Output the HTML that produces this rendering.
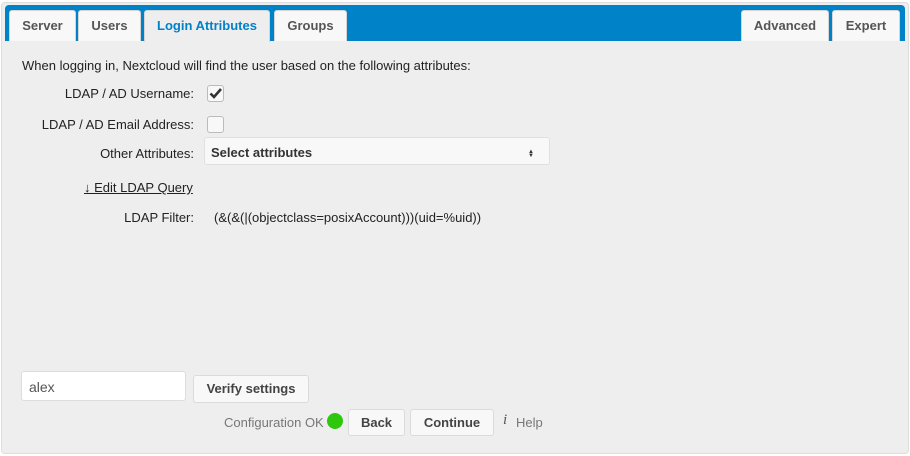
<!DOCTYPE html>
<html><head><style>
body{margin:0;width:910px;height:456px;background:#fff;font-family:"Liberation Sans",sans-serif;font-size:13px;color:#222;position:relative;overflow:hidden}
.box{position:absolute;left:1px;top:2px;width:906px;height:450px;border:1px solid #ddd;border-radius:4px;background:#eee}
.bar{position:absolute;left:5px;top:5px;width:900px;height:36px;background:#0082c9;border-radius:4px 4px 0 0}
.tab{position:absolute;top:10px;height:31px;background:#f8f8f8;border:1px solid #d5d5d5;border-bottom:none;border-radius:3px 3px 0 0;box-sizing:border-box;font-weight:bold;color:#555;text-align:center;line-height:30px;font-size:13px}
.tab.act{background:#eee;color:#0082c9;height:32px}
.a{position:absolute;white-space:nowrap}
.lbl{position:absolute;text-align:right;width:194px;left:0}
.cb{position:absolute;left:207px;width:15px;height:15px;border:1px solid #bbb;border-radius:3px;background:#f8f8f8}
.btn{position:absolute;background:#f8f8f8;border:1px solid #dbdbdb;border-radius:3px;box-sizing:border-box;font-weight:bold;color:#444;text-align:center}
</style></head><body>
<div class="box"></div>
<div class="bar"></div>
<div class="tab" style="left:9px;width:67px">Server</div>
<div class="tab" style="left:78px;width:63px">Users</div>
<div class="tab act" style="left:144px;width:126px">Login Attributes</div>
<div class="tab" style="left:274px;width:73px">Groups</div>
<div class="tab" style="left:741px;width:88px">Advanced</div>
<div class="tab" style="left:832px;width:68px">Expert</div>
<div class="a" style="left:22px;top:58px">When logging in, Nextcloud will find the user based on the following attributes:</div>
<div class="lbl" style="top:86px">LDAP / AD Username:</div>
<div class="cb" style="top:85px"></div>
<svg class="a" style="left:207px;top:85px" width="17" height="17" viewBox="0 0 17 17"><path d="M3.5 8.5 L7 12 L14 4" fill="none" stroke="#333" stroke-width="2.6"/></svg>
<div class="lbl" style="top:117px">LDAP / AD Email Address:</div>
<div class="cb" style="top:116px"></div>
<div class="lbl" style="top:146px">Other Attributes:</div>
<div class="a" style="left:204px;top:137px;width:346px;height:28px;background:#f8f8f8;border:1px solid #e0e0e0;border-radius:3px;box-sizing:border-box"></div>
<div class="a" style="left:211px;top:145px;font-weight:bold;color:#333">Select attributes</div>
<div class="a" style="left:528px;top:150px;font-size:6px;color:#333;line-height:4px">▲<br>▼</div>
<div class="a" style="left:84px;top:180px;text-decoration:underline;color:#222">↓ Edit LDAP Query</div>
<div class="lbl" style="top:210px">LDAP Filter:</div>
<div class="a" style="left:214px;top:210px">(&amp;(&amp;(|(objectclass=posixAccount)))(uid=%uid))</div>
<div class="a" style="left:21px;top:371px;width:165px;height:30px;background:#fff;border:1px solid #ddd;border-radius:3px;box-sizing:border-box;padding:7px 7px;color:#555;font-size:14px">alex</div>
<div class="btn" style="left:193px;top:375px;width:116px;height:28px;line-height:26px">Verify settings</div>
<div class="a" style="left:224px;top:415px;color:#777">Configuration OK</div>
<div class="a" style="left:327px;top:413px;width:16px;height:16px;border-radius:50%;background:#2fc70d"></div>
<div class="btn" style="left:348px;top:409px;width:57px;height:27px;line-height:26px">Back</div>
<div class="btn" style="left:410px;top:409px;width:84px;height:27px;line-height:26px">Continue</div>
<div class="a" style="left:503px;top:412px;font-family:'Liberation Serif',serif;font-style:italic;color:#555;font-size:15px">i</div>
<div class="a" style="left:516px;top:415px;color:#777">Help</div>
</body></html>
